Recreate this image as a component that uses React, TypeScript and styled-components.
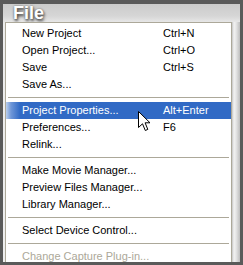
import React from 'react';
import styled, { createGlobalStyle } from 'styled-components';

type Entry =
    | { kind: 'item'; label: string; shortcut?: string; active?: boolean; disabled?: boolean }
    | { kind: 'sep' };

const entries: Entry[] = [
    { kind: 'item', label: 'New Project', shortcut: 'Ctrl+N' },
    { kind: 'item', label: 'Open Project...', shortcut: 'Ctrl+O' },
    { kind: 'item', label: 'Save', shortcut: 'Ctrl+S' },
    { kind: 'item', label: 'Save As...' },
    { kind: 'sep' },
    { kind: 'item', label: 'Project Properties...', shortcut: 'Alt+Enter', active: true },
    { kind: 'item', label: 'Preferences...', shortcut: 'F6' },
    { kind: 'item', label: 'Relink...' },
    { kind: 'sep' },
    { kind: 'item', label: 'Make Movie Manager...' },
    { kind: 'item', label: 'Preview Files Manager...' },
    { kind: 'item', label: 'Library Manager...' },
    { kind: 'sep' },
    { kind: 'item', label: 'Select Device Control...' },
    { kind: 'sep' },
    { kind: 'item', label: 'Change Capture Plug-in...', disabled: true },
];

export default function App() {
    return (
        <>
            <GlobalStyle />
            <Frame>
                <Inner>
                    <Header>File</Header>
                    <MenuArea>
                        <Menu>
                            {entries.map((e, i) =>
                                e.kind === 'sep' ? (
                                    <Separator key={i} />
                                ) : (
                                    <Item key={i} $active={e.active} $disabled={e.disabled}>
                                        <Label>{e.label}</Label>
                                        <Shortcut>{e.shortcut}</Shortcut>
                                    </Item>
                                )
                            )}
                        </Menu>
                        <Shadow />
                    </MenuArea>
                </Inner>
                <Cursor width="14" height="21" viewBox="0 0 14 21">
                    <path
                        d="M0.5 0.5 L0.5 16.5 L4.5 12.8 L7.3 19.5 L9.8 18.4 L7.1 11.8 L12 11.8 Z"
                        fill="#fff"
                        stroke="#000"
                        strokeWidth="1"
                    />
                </Cursor>
            </Frame>
        </>
    );
}

const GlobalStyle = createGlobalStyle`
    html, body {
        margin: 0;
        padding: 0;
        background: #5a5a5a;
    }
`;

const Frame = styled.div`
    position: relative;
    width: 243px;
    height: 265px;
    box-sizing: border-box;
    padding: 4px 3px 3px 3px;
    background: #5a5a5a;
    font-family: Tahoma, 'Liberation Sans', sans-serif;
`;

const Inner = styled.div`
    height: 100%;
    display: flex;
    flex-direction: column;
    background: linear-gradient(to bottom, #cbcbcb 0, #d6d6d6 12px, #ececec 20px, #eeeeee 100%);
`;

const Header = styled.div`
    height: 18px;
    flex-shrink: 0;
    padding-left: 10px;
    font-family: 'Liberation Sans', Arial, sans-serif;
    font-weight: bold;
    font-size: 18px;
    line-height: 19px;
    color: #ffffff;
    text-shadow: 1px 2px 3px #3a3a3a, 0 0 2px #707070;
`;

const MenuArea = styled.div`
    flex: 1;
    min-height: 0;
    overflow: hidden;
    display: flex;
    padding-left: 2px;
`;

const Menu = styled.div`
    width: 227px;
    flex-shrink: 0;
    box-sizing: border-box;
    border: 1px solid #aca899;
    border-bottom: none;
    background: #ffffff;
    padding-top: 2px;
`;

const Shadow = styled.div`
    flex: 1;
    background: linear-gradient(to right, #c4c4c4 0, #f2f2f2 2px, #e6e6e6 4px, #bdbdbd 8px);
`;

const Item = styled.div<{ $active?: boolean; $disabled?: boolean }>`
    display: grid;
    grid-template-columns: 141px 1fr;
    height: 17px;
    padding-left: 16px;
    font-size: 11px;
    line-height: 17px;
    white-space: nowrap;
    color: ${(p) => (p.$active ? '#ffffff' : p.$disabled ? '#aca899' : '#000000')};
    background: ${(p) =>
        p.$active ? 'linear-gradient(to right, #bcd0ee 0, #6f97d8 5px, #316ac5 14px)' : 'transparent'};
`;

const Label = styled.span``;

const Shortcut = styled.span``;

const Separator = styled.div`
    height: 9px;
    box-sizing: border-box;
    padding: 4px 2px 0 2px;

    &::after {
        content: '';
        display: block;
        height: 1px;
        background: #aca899;
    }
`;

const Cursor = styled.svg`
    position: absolute;
    left: 138px;
    top: 111px;
`;
